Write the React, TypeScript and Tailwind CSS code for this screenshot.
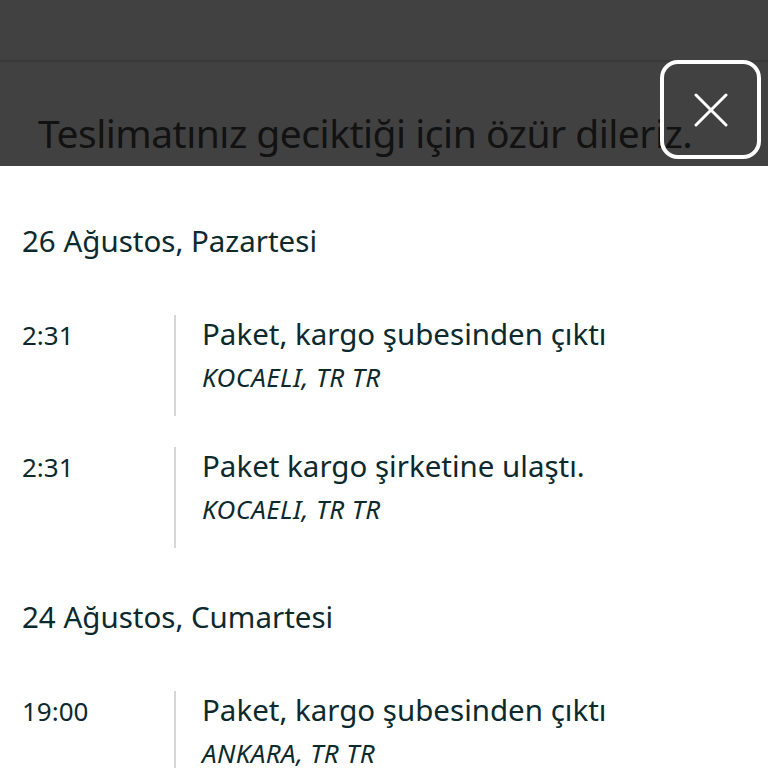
import React from 'react';

type Event = { time: string; title: string; place: string };
type Day = { date: string; events: Event[] };

const days: Day[] = [
  {
    date: '26 Ağustos, Pazartesi',
    events: [
      { time: '2:31', title: 'Paket, kargo şubesinden çıktı', place: 'KOCAELI, TR TR' },
      { time: '2:31', title: 'Paket kargo şirketine ulaştı.', place: 'KOCAELI, TR TR' },
    ],
  },
  {
    date: '24 Ağustos, Cumartesi',
    events: [{ time: '19:00', title: 'Paket, kargo şubesinden çıktı', place: 'ANKARA, TR TR' }],
  },
];

export default function App() {
  return (
    <div
      className="w-[768px] h-[768px] overflow-hidden bg-white text-[#0c2a2d]"
      style={{ fontFamily: '"Noto Sans", "Open Sans", sans-serif' }}
    >
      {/* karartılmış üst alan */}
      <div className="relative h-[166px] bg-[#414141]">
        <div className="h-[62px] border-b-2 border-[#393939]" />
        <h1 className="pl-[38px] pt-[48px] text-[39px] leading-[46px] text-[#121212] tracking-[-0.5px]">
          Teslimatınız geciktiği için özür dileriz.
        </h1>
        <button className="absolute left-[660px] top-[60px] w-[101px] h-[99px] rounded-[18px] border-[4px] border-white flex items-center justify-center">
          <svg width="34" height="34" viewBox="0 0 34 34">
            <path d="M2 2 L32 32 M32 2 L2 32" stroke="white" strokeWidth="3" strokeLinecap="round" />
          </svg>
        </button>
      </div>

      <div className="pl-[22px] pt-[57px]">
        {days.map((day, di) => (
          <div key={di} className={di > 0 ? 'mt-[51px]' : ''}>
            <h2 className="text-[29.5px] leading-[36px]">{day.date}</h2>
            <div className="mt-[56px] flex flex-col gap-[31px]">
              {day.events.map((ev, ei) => (
                <div key={ei} className="flex h-[101px]">
                  <div className="w-[152px] pt-[4px] text-[26px] leading-[32px]">{ev.time}</div>
                  <div className="border-l-2 border-[#d6d6d6] pl-[26px] pt-[1px]">
                    <div className="text-[29.5px] leading-[36px]">{ev.title}</div>
                    <div className="mt-[9px] text-[26px] leading-[32px] italic tracking-[0.4px]">
                      {ev.place}
                    </div>
                  </div>
                </div>
              ))}
            </div>
          </div>
        ))}
      </div>
    </div>
  );
}
